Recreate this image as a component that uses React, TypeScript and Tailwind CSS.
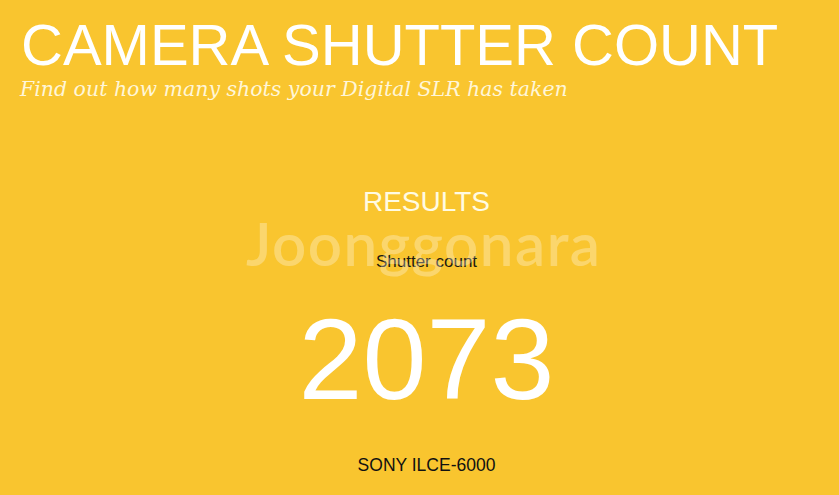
import React from "react";

export default function App() {
  return (
    <div className="relative w-[839px] h-[495px] overflow-hidden bg-[#f9c52f]" style={{ fontFamily: '"Liberation Sans", Arial, sans-serif' }}>
      <header className="pl-[20px] pt-[16px]">
        <h1 className="text-[58px] leading-[58px] text-white pl-[1px]">CAMERA SHUTTER COUNT</h1>
        <p className="text-[20.5px] leading-[26px] italic text-[#fff6d8] mt-[2px]" style={{ fontFamily: '"DejaVu Serif", Georgia, serif' }}>
          Find out how many shots your Digital SLR has taken
        </p>
      </header>
      <main className="flex flex-col items-center pl-[14px] mt-[84px]">
        <h2 className="text-[28px] leading-[32px] text-[#fffbe3]">RESULTS</h2>
        <p className="text-[17px] leading-[20px] text-[#1d1a10] mt-[34px]">Shutter count</p>
        <p className="text-[115px] leading-[115px] text-white mt-[30px]">2073</p>
        <p className="text-[17.5px] leading-[20px] text-[#111] mt-[38px]">SONY ILCE-6000</p>
      </main>
      <div className="pointer-events-none absolute left-[246px] top-[211px] text-[60px] leading-[64px] font-semibold tracking-[1.5px] text-white/30" style={{ fontFamily: 'Lato, sans-serif' }}>
        Joonggonara
      </div>
    </div>
  );
}
